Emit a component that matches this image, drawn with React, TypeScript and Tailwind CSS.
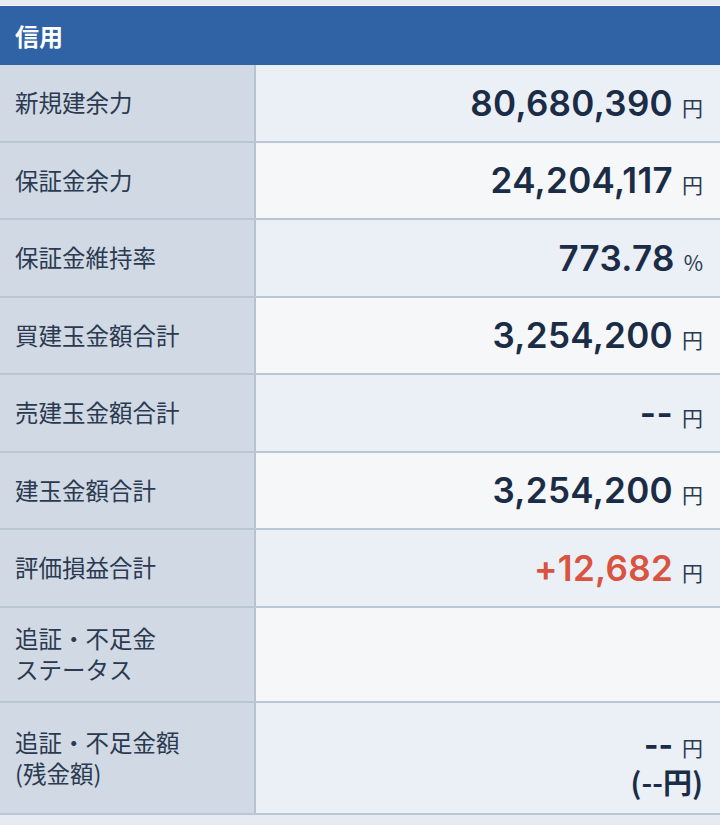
import React from "react";

type Row = {
  label: React.ReactNode;
  value?: string;
  unit?: string;
  red?: boolean;
  h: string;
  alt: boolean;
  custom?: React.ReactNode;
};

const jp = { fontFamily: '"Noto Sans CJK JP", "Noto Sans", sans-serif' };
const num = { fontFamily: 'Inter, "Noto Sans CJK JP", sans-serif' };

export default function App() {
  const rows: Row[] = [
    { label: "新規建余力", value: "80,680,390", unit: "円", h: "h-[77.5px]", alt: true },
    { label: "保証金余力", value: "24,204,117", unit: "円", h: "h-[77.5px]", alt: false },
    { label: "保証金維持率", value: "773.78", unit: "%", h: "h-[77.5px]", alt: true },
    { label: "買建玉金額合計", value: "3,254,200", unit: "円", h: "h-[77.5px]", alt: false },
    { label: "売建玉金額合計", value: "--", unit: "円", h: "h-[77.5px]", alt: true },
    { label: "建玉金額合計", value: "3,254,200", unit: "円", h: "h-[77.5px]", alt: false },
    { label: "評価損益合計", value: "+12,682", unit: "円", red: true, h: "h-[77.5px]", alt: true },
    {
      label: (
        <>
          追証・不足金
          <br />
          ステータス
        </>
      ),
      h: "h-[95px]",
      alt: false,
    },
    {
      label: (
        <>
          追証・不足金額
          <br />
          (残金額)
        </>
      ),
      h: "h-[112px]",
      alt: true,
      custom: (
        <div className="flex flex-col items-end pt-[10px]">
          <div className="flex items-baseline h-[36px]">
            <span className="text-[31px] font-bold leading-[36px] text-[#1b2c47]" style={num}>
              --
            </span>
            <span className="ml-[9px] text-[21px] text-[#2a3a52]" style={jp}>
              円
            </span>
          </div>
          <div className="text-[29px] font-bold leading-[36px] text-[#1b2c47]" style={jp}>
            (--円)
          </div>
        </div>
      ),
    },
  ];

  return (
    <div className="w-[720px] h-[825px] bg-[#e6ebf2] overflow-hidden" style={jp}>
      <div className="h-[6px] bg-[#e6ebf2] border-b border-[#f3f5f9]" />
      <div className="h-[59px] bg-[#2f63a6] flex items-center pl-[15px]">
        <span className="text-white text-[24px] font-bold" style={jp}>
          信用
        </span>
      </div>
      {rows.map((r, i) => (
        <div key={i} className={`flex border-b-2 border-[#b9c6d3] ${r.h}`}>
          <div className="w-[256px] shrink-0 bg-[#d0d9e4] border-r-2 border-[#b6c3d0] flex items-center pl-[15px] text-[23.5px] leading-[31px] text-[#2b3a50]">
            <div>{r.label}</div>
          </div>
          <div
            className={`flex-1 flex items-center justify-end pr-[17px] ${
              r.alt ? "bg-[#ebeff6]" : "bg-[#f6f7f9]"
            }`}
          >
            {r.custom
              ? r.custom
              : r.value && (
                  <div className="flex items-baseline">
                    <span
                      className={`text-[35px] font-semibold tracking-[0.3px] ${
                        r.red ? "text-[#d9533f]" : "text-[#1b2c47]"
                      }`}
                      style={num}
                    >
                      {r.value}
                    </span>
                    <span className="ml-[9px] text-[21px] text-[#2a3a52]" style={jp}>
                      {r.unit}
                    </span>
                  </div>
                )}
          </div>
        </div>
      ))}
    </div>
  );
}
